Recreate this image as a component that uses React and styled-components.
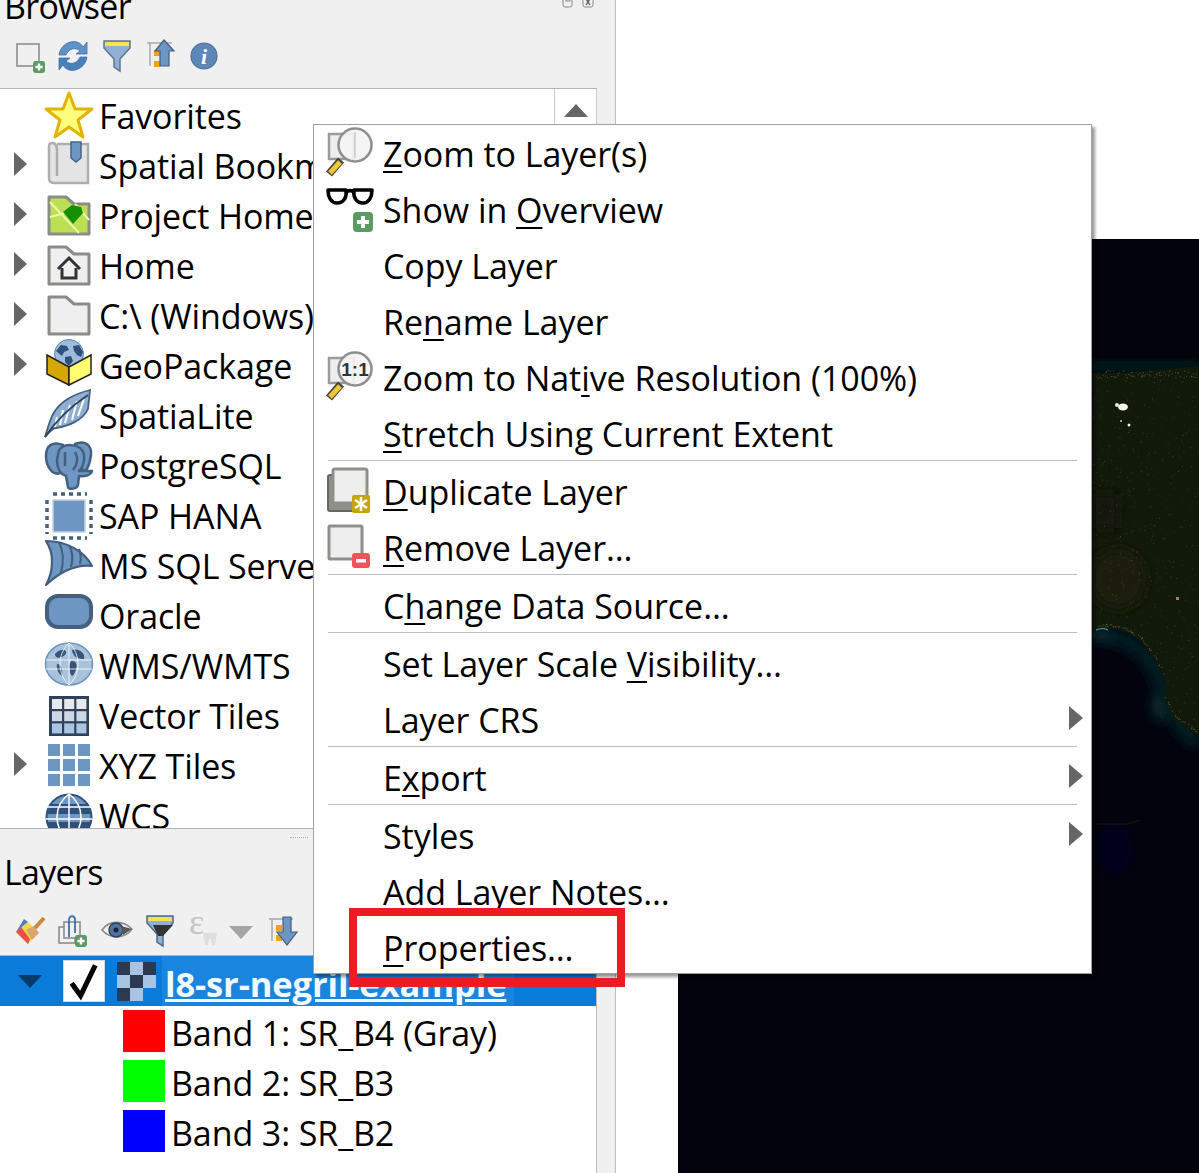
import React, { useMemo } from 'react';
import styled, { createGlobalStyle } from 'styled-components';

const GlobalStyle = createGlobalStyle`
    html, body { margin: 0; padding: 0; background: #ffffff; }
    body { font-family: 'Open Sans', 'Liberation Sans', sans-serif; color: #000000; }
`;

const Window = styled.div`
    position: relative;
    display: flex;
    width: 1199px;
    height: 1173px;
    overflow: hidden;
    background: #ffffff;
`;

const Sidebar = styled.div`
    display: flex;
    flex-direction: column;
    flex: 0 0 616px;
    box-sizing: border-box;
    height: 100%;
    background: #f0f0f0;
    border-right: 1px solid #bcbcbc;
`;

const PanelHead = styled.div`
    display: flex;
    justify-content: space-between;
    box-sizing: border-box;
    height: ${(p) => p.$height}px;
    padding-right: 21px;
`;

const PanelTitle = styled.div`
    font-size: 34px;
    line-height: 44px;
    padding-left: 4px;
    margin-top: ${(p) => p.$top}px;
    letter-spacing: -0.7px;
`;

const DockButtons = styled.div`
    display: flex;
    gap: 8px;
    margin-top: -4px;
    height: 13px;
`;

const Toolbar = styled.div`
    display: flex;
    align-items: center;
    box-sizing: border-box;
    height: ${(p) => p.$height}px;
    padding-left: 8px;
    padding-bottom: ${(p) => p.$bottom || 0}px;
    flex-shrink: 0;
`;

const ToolCell = styled.div`
    display: flex;
    justify-content: center;
    flex: 0 0 ${(p) => p.$width || 43.5}px;
`;

const Glyph = styled.svg`
    display: block;
    flex-shrink: 0;
    width: ${(p) => p.$w || p.$size}px;
    height: ${(p) => p.$h || p.$size}px;
    overflow: visible;
`;

const BrowserTree = styled.div`
    display: flex;
    box-sizing: border-box;
    width: 597px;
    height: 741px;
    background: #ffffff;
    border-top: 1px solid #b4b4b4;
    border-bottom: 1px solid #b4b4b4;
`;

const TreeList = styled.div`
    flex: 1;
    min-width: 0;
    padding-top: 2px;
    overflow: hidden;
`;

const Scrollbar = styled.div`
    flex: 0 0 43px;
    box-sizing: border-box;
    background: #f0f0f0;
    border-left: 1px solid #c8c8c8;
    border-right: 1px solid #c8c8c8;
`;

const ScrollButton = styled.div`
    display: flex;
    align-items: center;
    justify-content: center;
    height: 42px;
    background: #ffffff;
`;

const TreeRow = styled.div`
    display: flex;
    align-items: center;
    height: 50px;
    padding-left: 14px;
    white-space: nowrap;
`;

const Expander = styled.div`
    flex: 0 0 31px;
    margin-top: -4px;
`;

const TreeLabel = styled.span`
    margin-left: 6px;
    font-size: 34px;
    letter-spacing: -0.1px;
    line-height: 50px;
`;

const LayersPanel = styled.div`
    flex: 1;
    display: flex;
    flex-direction: column;
    min-height: 0;
`;

const Grip = styled.div`
    width: 18px;
    margin: 8px 0 0 290px;
    border-top: 1px dotted #b0b0b0;
`;

const LayerTree = styled.div`
    flex: 1;
    box-sizing: border-box;
    width: 597px;
    background: #ffffff;
    border-top: 1px solid #b4b4b4;
    border-right: 1px solid #bcbcbc;
`;

const SelectedLayer = styled.div`
    display: flex;
    align-items: center;
    height: 50px;
    padding-left: 18px;
    background: #0a7bd8;
`;

const LayerCheck = styled.div`
    display: flex;
    align-items: center;
    justify-content: center;
    box-sizing: border-box;
    width: 42px;
    height: 42px;
    margin-left: 21px;
    background: #ffffff;
    border: 1px solid #d8d8d8;
`;

const Checker = styled.div`
    display: grid;
    grid-template-columns: repeat(3, 13px);
    grid-auto-rows: 13px;
    margin-left: 12px;
`;

const CheckerCell = styled.div`
    background: ${(p) => p.$color};
`;

const LayerName = styled.span`
    margin-left: 6px;
    padding: 0 8px 0 3px;
    height: 50px;
    line-height: 56px;
    font-size: 34.5px;
    font-weight: 700;
    letter-spacing: -0.1px;
    color: #f2f8ff;
    background: #1a85de;
    text-decoration: underline;
    white-space: nowrap;
    overflow: hidden;
`;

const BandRow = styled.div`
    display: flex;
    align-items: center;
    height: 50px;
    padding-left: 123px;
`;

const Swatch = styled.div`
    width: 42px;
    height: 42px;
    background: ${(p) => p.$color};
`;

const BandLabel = styled.span`
    margin-left: 6px;
    padding-top: 3px;
    font-size: 34px;
    letter-spacing: -0.1px;
    line-height: 50px;
`;

const MapArea = styled.div`
    flex: 1;
    padding: 239px 0 0 62px;
    min-width: 0;
`;

const MapCanvas = styled.svg`
    display: block;
    width: 521px;
    height: 934px;
    background: #02030c;
`;

const ContextMenu = styled.div`
    position: absolute;
    left: 313px;
    top: 124px;
    box-sizing: border-box;
    width: 779px;
    height: 850px;
    overflow: hidden;
    background: #ffffff;
    border: 1px solid #a0a0a0;
    box-shadow: 3px 3px 3px rgba(0, 0, 0, 0.4);
`;

const MenuRow = styled.div`
    display: flex;
    align-items: center;
    height: 56px;
    padding: 0 8px 0 12px;
    white-space: nowrap;
`;

const MenuIcon = styled.div`
    flex: 0 0 48px;
    height: 48px;
`;

const MenuLabel = styled.span`
    margin-left: 9px;
    font-size: 34px;
    letter-spacing: -0.05px;
    line-height: 56px;
    padding-top: 1px;

    u {
        text-underline-offset: 4px;
        text-decoration-thickness: 2px;
    }
`;

const SubArrow = styled.div`
    margin-left: auto;
    margin-top: -2px;
`;

const MenuSeparator = styled.div`
    height: 1px;
    margin: -1px 14px 2px 14px;
    background: #bdbdbd;
`;

const Callout = styled.div`
    position: absolute;
    left: 349px;
    top: 908px;
    box-sizing: border-box;
    width: 276px;
    height: 79px;
    border: 8px solid #ed1c24;
    border-bottom-width: 9px;
    pointer-events: none;
`;

const BLUE = '#6d96c3';
const DARK = '#45607f';

function Triangle({ dir = 'right', fill = '#666666', w = 13, h = 24 }) {
    const points = {
        right: `0,0 ${w},${h / 2} 0,${h}`,
        down: `0,0 ${w},0 ${w / 2},${h}`,
        up: `0,${h} ${w},${h} ${w / 2},0`,
    };
    return (
        <Glyph $w={w} $h={h} viewBox={`0 0 ${w} ${h}`}>
            <polygon points={points[dir]} fill={fill} />
        </Glyph>
    );
}

function FolderShape({ fill = '#efefef' }) {
    return <path d="M4 5H21L29 12H44V42H4Z" fill={fill} stroke="#8a8c88" strokeWidth="3" strokeLinejoin="round" />;
}

const icon48 = (body) => () => <Glyph $size={48} viewBox="0 0 48 48">{body}</Glyph>;

const StarIcon = icon48(
    <polygon points="24,1 30,17 47,17 33,28 38,45 24,35 10,45 15,28 1,17 18,17" fill="#ffff7f" stroke="#e2b300" strokeWidth="3" strokeLinejoin="round" />
);

const BookmarkIcon = icon48(<>
    <path d="M12 2H43V41H9C5 41 4 39 4 36V4C4 1 8 0 10 2C12 4 12 6 12 8V34" fill="#e4e4e4" stroke="#aeaeae" strokeWidth="2.5" />
    <path d="M26 0H36V16L31 20L26 16Z" fill="#6d96c3" stroke="#47648a" strokeWidth="1.5" />
</>);

const ProjectIcon = icon48(<>
    <FolderShape fill="#bbe054" />
    <path d="M5 10L34 41M5 25L20 21M30 12L44 28" stroke="#f2f5b0" strokeWidth="2" fill="none" />
    <polygon points="18,20 27,13 36,15 38,21 28,32" fill="#159000" />
</>);

const HomeIcon = icon48(<>
    <FolderShape />
    <path d="M13 27L24 16L35 27M17 26V36H31V26" fill="none" stroke="#333333" strokeWidth="3" />
</>);

const DriveIcon = icon48(<FolderShape />);

const GeoPackageIcon = icon48(<>
    <circle cx="24" cy="12" r="14.5" fill="#9dbbdc" stroke="#5d83ae" strokeWidth="1" />
    <path d="M11 9L16 3L22 4L24 8L19 10L17 14ZM28 4L34 3L38 10L36 15L32 13L29 9ZM20 15L26 14L28 19L24 24L20 20Z" fill="#2f5079" />
    <polygon points="2,13 24,25 24,43 2,32" fill="#d4a800" stroke="#222222" strokeWidth="1.5" />
    <polygon points="46,13 24,25 24,43 46,32" fill="#ffff70" stroke="#222222" strokeWidth="1.5" />
</>);

const SpatiaLiteIcon = icon48(<>
    <path d="M45 -2C30 2 15 8 7 24C4 31 2 38 0 45C4 40 8 36 11 36C24 34 38 28 43 17Z" fill="#8fb0d4" stroke="#45607f" strokeWidth="1.8" />
    <path d="M39 7L33 24M32 9L27 28M25 13L20 31M18 18L15 33M12 25L10 35" stroke="#ffffff" strokeWidth="2" fill="none" />
    <path d="M0 45C10 30 25 15 43 3" stroke="#2f4158" strokeWidth="1.8" fill="none" />
</>);

const PostgresIcon = icon48(<>
    <path d="M18 3C8 -1 1 3 1 14C1 25 8 34 15 31L19 18Z" fill={BLUE} stroke={DARK} strokeWidth="2.5" />
    <path d="M30 2C40 -2 47 3 46 13C45 21 43 26 40 30L30 18Z" fill={BLUE} stroke={DARK} strokeWidth="2.5" />
    <path d="M14 8C20 1 32 2 37 8C41 14 39 24 34 29L47 29C46 33 40 35 34 34L33 43C32 47 24 48 23 45L21 34C15 32 12 26 12 18Z" fill={BLUE} stroke={DARK} strokeWidth="2.5" strokeLinejoin="round" />
    <path d="M20 10V24M30 10C33 15 33 22 28 28" fill="none" stroke={DARK} strokeWidth="2.5" />
</>);

const HanaIcon = icon48(<>
    <rect x="8" y="8" width="32" height="32" fill={BLUE} stroke="#c5d2e1" strokeWidth="1.5" />
    <path d="M8 2H42M2 8V42M8 46H42M46 8V42" stroke={DARK} strokeWidth="3.5" strokeDasharray="4 4" fill="none" />
</>);

const SailIcon = icon48(<>
    <path d="M1 -1C22 -1 40 10 47 24C30 22 15 30 1 43C8 30 10 12 1 -1Z" fill={BLUE} stroke={DARK} strokeWidth="2.2" strokeLinejoin="round" />
    <path d="M14 0C18 8 19 20 16 31M24 3C28 10 28 18 26 25M34 7C36 12 36 18 35 22" fill="none" stroke={DARK} strokeWidth="2.2" />
</>);

const OracleIcon = icon48(
    <rect x="2" y="-7" width="44" height="31" rx="11" fill={BLUE} stroke={DARK} strokeWidth="4" transform="translate(0 11)" />
);

const WmsIcon = icon48(<>
    <ellipse cx="24" cy="22" rx="23.5" ry="21" fill="#a9c2dc" stroke="#6b93c0" strokeWidth="1.5" />
    <path d="M10 12C15 6 22 7 21 11C19 16 10 18 10 12ZM27 8C34 6 41 12 39 17C33 17 28 15 27 8ZM26 19C32 18 33 24 30 30C28 35 26 35 25 30C24 26 24 22 26 19ZM12 22C16 22 18 28 17 34C14 32 11 27 12 22Z" fill="#34547a" />
    <path d="M1 18H47M1 27H47M24 1V43M24 1C12 12 12 32 24 43M24 1C36 12 36 32 24 43" fill="none" stroke="#ffffff" strokeWidth="0.8" />
</>);

const VectorTilesIcon = icon48(<>
    <rect x="4" y="4" width="40" height="40" fill="#2f4158" />
    {[0, 1, 2].map((r) => [0, 1, 2].map((c) => (
        <rect key={`${r}${c}`} x={7 + c * 12.2} y={7 + r * 12.2} width="10" height="10" fill={['#e6e8ec', '#ccd8e6', '#a9c5e3'][r]} />
    )))}
</>);

const XyzIcon = icon48(<>
    {[0, 1, 2].map((r) => [0, 1, 2].map((c) => (
        <rect key={`${r}${c}`} x={3 + c * 15} y={2 + r * 15} width="12" height="12" fill={BLUE} />
    )))}
</>);

const WcsIcon = icon48(<>
    <circle cx="24" cy="25" r="22.5" fill={BLUE} stroke="#2f5079" strokeWidth="2" />
    <path d="M6 12H42L46 22H2ZM2 30H46L42 40H6Z" fill="#2f5079" />
    <path d="M1 15H47M1 27H47M24 2V48M24 2C8 14 8 36 24 48M24 2C40 14 40 36 24 48" fill="none" stroke="#ffffff" strokeWidth="1.5" />
</>);

const treeItems = [
    { label: 'Favorites', Icon: StarIcon },
    { label: 'Spatial Bookmarks', Icon: BookmarkIcon, arrow: true },
    { label: 'Project Home', Icon: ProjectIcon, arrow: true },
    { label: 'Home', Icon: HomeIcon, arrow: true },
    { label: 'C:\\ (Windows)', Icon: DriveIcon, arrow: true },
    { label: 'GeoPackage', Icon: GeoPackageIcon, arrow: true },
    { label: 'SpatiaLite', Icon: SpatiaLiteIcon },
    { label: 'PostgreSQL', Icon: PostgresIcon },
    { label: 'SAP HANA', Icon: HanaIcon },
    { label: 'MS SQL Server', Icon: SailIcon },
    { label: 'Oracle', Icon: OracleIcon },
    { label: 'WMS/WMTS', Icon: WmsIcon },
    { label: 'Vector Tiles', Icon: VectorTilesIcon },
    { label: 'XYZ Tiles', Icon: XyzIcon, arrow: true },
    { label: 'WCS', Icon: WcsIcon },
];

const Tool = ({ children, width }) => (
    <ToolCell $width={width}>
        <Glyph $size={32} viewBox="0 0 32 32">{children}</Glyph>
    </ToolCell>
);

const GreenPlus = ({ x, y, s = 12 }) => (
    <>
        <rect x={x} y={y} width={s} height={s} rx={s / 5} fill="#5b9a62" />
        <path d={`M${x + s / 2} ${y + s / 5}V${y + s - s / 5}M${x + s / 5} ${y + s / 2}H${x + s - s / 5}`} stroke="#ffffff" strokeWidth={s / 5} />
    </>
);

function BrowserToolbar() {
    return (
        <Toolbar $height={54} $bottom={10}>
            <Tool>
                <rect x="3" y="4" width="22" height="22" fill="none" stroke="#8e8e8e" strokeWidth="1.6" />
                <GreenPlus x={19} y={21} />
            </Tool>
            <Tool>
                <path d="M2 15C3 6 12 0 20 2C23 3 25 5 26 7L30 2V14H19L23 11C19 7 12 8 9 15Z" fill="#5f93c8" stroke="#3d6fa6" strokeWidth="0.8" />
                <path d="M30 17C29 26 20 32 12 30C9 29 7 27 6 25L2 30V18H13L9 21C13 25 20 24 23 17Z" fill="#4a80ba" stroke="#3d6fa6" strokeWidth="0.8" />
            </Tool>
            <Tool>
                <path d="M3 1H29V8L19 19V31L13 27V19L3 8Z" fill="#8fb0d4" stroke="#5b7894" strokeWidth="1.5" />
                <rect x="4" y="2" width="24" height="4" fill="#ffe14d" />
            </Tool>
            <Tool>
                <path d="M3 3H28M6 3V26" stroke="#a8a8a8" strokeWidth="1.5" fill="none" />
                <rect x="10" y="10" width="6" height="6" fill="#f7a11a" />
                <rect x="10" y="21" width="6" height="6" fill="#f7a11a" />
                <path d="M20 0L30 11H25V26H16V11H11Z" fill="#6d96c3" stroke="#3e5f86" strokeWidth="1.2" />
            </Tool>
            <Tool>
                <circle cx="16" cy="16" r="13" fill="#5d87b8" stroke="#4f739c" strokeWidth="1.2" />
                <text x="16" y="24" fontFamily="Liberation Serif, serif" fontStyle="italic" fontWeight="700" fontSize="22" fill="#ffffff" textAnchor="middle">i</text>
            </Tool>
        </Toolbar>
    );
}

function LayersToolbar() {
    return (
        <Toolbar $height={49}>
            <Tool>
                <polygon points="2,17 14,7 24,17 14,29" fill="#f2d64b" />
                <polygon points="2,17 8,23 14,29 16,24 7,12" fill="#e8514a" />
                <polygon points="2,17 10,10 14,7 10,4" fill="#4a7cc0" />
                <path d="M12 15L20 11L25 18L18 25Z" fill="#d9a66b" />
                <path d="M21 13L30 3" stroke="#c88a3d" strokeWidth="4" />
            </Tool>
            <Tool>
                <rect x="2" y="12" width="16" height="16" fill="none" stroke="#8e8e8e" strokeWidth="1.6" />
                <rect x="7" y="7" width="16" height="16" fill="#efefef" stroke="#8e8e8e" strokeWidth="1.6" />
                <path d="M12 22V5C12 0 18 0 18 5V18" fill="none" stroke="#3e6fa8" strokeWidth="1.8" />
                <GreenPlus x={18} y={20} />
            </Tool>
            <Tool>
                <path d="M1 15C8 5 22 5 31 14C24 24 9 24 1 15Z" fill="#f2f2f2" stroke="#8a8a8a" strokeWidth="1.6" />
                <circle cx="15" cy="15" r="7" fill="#4f74a3" stroke="#2f4158" strokeWidth="1.5" />
                <circle cx="15" cy="15" r="2.5" fill="#1c2533" />
                <path d="M20 11L31 14L22 20" fill="#555555" />
            </Tool>
            <Tool>
                <path d="M3 1H29V8L19 19V31L13 27V19L3 8Z" fill="#8fb0d4" stroke="#4f6b87" strokeWidth="1.5" />
                <rect x="4" y="2" width="24" height="4" fill="#ffe14d" />
                <polygon points="9,10 29,10 19,21 14,21" fill="#333333" />
            </Tool>
            <Tool>
                <text x="1" y="19" fontFamily="Liberation Serif, serif" fontSize="36" fill="#c4c4c4">ε</text>
                <path d="M15 18H29L27 30H24L23 24H21L20 30H17Z" fill="#dedede" />
            </Tool>
            <ToolCell $width={36}>
                <Glyph $size={24} viewBox="0 0 24 24">
                    <polygon points="0,7 24,7 12,20" fill="#a4a4a4" transform="translate(-3 0)" />
                </Glyph>
            </ToolCell>
            <Tool>
                <path d="M2 4H26M5 4V26" stroke="#a8a8a8" strokeWidth="1.5" fill="none" />
                <rect x="9" y="10" width="6" height="6" fill="#f7a11a" />
                <rect x="9" y="20" width="6" height="6" fill="#f7a11a" />
                <path d="M16 2H24V17H30L20 30L10 17H16Z" fill="#6d96c3" stroke="#3e5f86" strokeWidth="1.2" />
            </Tool>
            <Tool>
                <path d="M4 4H28" stroke="#a8a8a8" strokeWidth="1.5" />
            </Tool>
        </Toolbar>
    );
}

const Lens = ({ children }) => (
    <>
        <rect x="3" y="5" width="25" height="25" fill="#eeeeee" stroke="#9a9a9a" strokeWidth="2.5" />
        <path d="M15 31L3 45" stroke="#444444" strokeWidth="8" />
        <path d="M14 33L4 44" stroke="#f2c934" strokeWidth="5" />
        <circle cx="29" cy="16" r="16.5" fill="#f4f4f4" fillOpacity="0.9" stroke="#8e8e8e" strokeWidth="2.5" />
        {children}
    </>
);

const menuIcons = {
    zoom: <Lens><path d="M29 3V29" stroke="#d4d4d4" strokeWidth="2" /></Lens>,
    glasses: (
        <>
            <path d="M2 5H20C21 12 18 18 11 18C5 18 2 12 2 5ZM28 5H46C46 12 43 18 37 18C30 18 27 12 28 5ZM20 7C23 5 25 5 28 7" fill="#ffffff" stroke="#000000" strokeWidth="3.6" strokeLinejoin="round" />
            <GreenPlus x={27} y={27} s={20} />
        </>
    ),
    native: (
        <Lens>
            <text x="29" y="23" fontFamily="Liberation Sans, sans-serif" fontWeight="700" fontSize="19" fill="#333333" textAnchor="middle">1:1</text>
        </Lens>
    ),
    duplicate: (
        <>
            <rect x="2" y="8" width="34" height="36" rx="2" fill="#8e8f88" stroke="#666760" strokeWidth="2" />
            <rect x="7" y="2" width="34" height="34" rx="2" fill="#eeeeee" stroke="#8f908a" strokeWidth="3" />
            <rect x="26" y="28" width="18" height="18" rx="2" fill="#c6a500" />
            <path d="M35 30V44M29 33L41 41M41 33L29 41" stroke="#ffffff" strokeWidth="2.6" />
        </>
    ),
    remove: (
        <>
            <rect x="3" y="3" width="33" height="33" rx="1" fill="#eeeeee" stroke="#8f908a" strokeWidth="3" />
            <rect x="26" y="30" width="18" height="15" rx="3" fill="#f2535b" />
            <rect x="30" y="36" width="10" height="3.5" fill="#ffffff" />
        </>
    ),
};

const U = ({ children }) => <u>{children}</u>;

const menuItems = [
    { label: <><U>Z</U>oom to Layer(s)</>, icon: 'zoom' },
    { label: <>Show in <U>O</U>verview</>, icon: 'glasses' },
    { label: 'Copy Layer' },
    { label: <>Re<U>n</U>ame Layer</> },
    { label: <>Zoom to Nat<U>i</U>ve Resolution (100%)</>, icon: 'native' },
    { label: <><U>S</U>tretch Using Current Extent</> },
    { separator: true },
    { label: <><U>D</U>uplicate Layer</>, icon: 'duplicate' },
    { label: <><U>R</U>emove Layer…</>, icon: 'remove' },
    { separator: true },
    { label: <>C<U>h</U>ange Data Source…</> },
    { separator: true },
    { label: <>Set Layer Scale <U>V</U>isibility…</> },
    { label: 'Layer CRS', sub: true },
    { separator: true },
    { label: <>E<U>x</U>port</>, sub: true },
    { separator: true },
    { label: 'Styles', sub: true },
    { label: 'Add Layer Notes…' },
    { label: <><U>P</U>roperties…</> },
];

// coast of the land part, in map coordinates
const coast = [[0, 391], [414, 391], [432, 389], [448, 393], [462, 401], [477, 421], [487, 441], [487, 461], [497, 481], [521, 497]];

function coastY(x) {
    for (let i = 1; i < coast.length; i++) {
        if (x <= coast[i][0]) {
            const [x0, y0] = coast[i - 1];
            const [x1, y1] = coast[i];
            return y0 + ((y1 - y0) * (x - x0)) / (x1 - x0);
        }
    }
    return 497;
}

function SatelliteMap() {
    const specks = useMemo(() => {
        let seed = 4711;
        const rnd = () => {
            seed = (seed * 16807) % 2147483647;
            return seed / 2147483647;
        };
        const out = [];
        for (let i = 0; i < 1400; i++) {
            const x = 414 + rnd() * 107;
            const y = 131 + rnd() * 360;
            if (y > coastY(x)) continue;
            const warm = rnd() > 0.7;
            out.push({ x, y, c: warm ? '#6e5c34' : '#27331a', o: 0.25 + rnd() * 0.4 });
        }
        for (let i = 0; i < 70; i++) {
            const x = 414 + rnd() * 107;
            out.push({ x, y: coastY(x) - 2 - rnd() * 3, c: '#8a7a4e', o: 0.6 });
            out.push({ x, y: 131 + rnd() * 8, c: '#85764a', o: 0.6 });
        }
        return out;
    }, []);

    const landPath = `M0 133L440 134L480 131L521 127V497${coast.slice().reverse().slice(1).map(([x, y]) => `L${x} ${y}`).join('')}Z`;

    return (
        <MapCanvas viewBox="0 0 521 934">
            <defs>
                <filter id="soft" x="-50%" y="-50%" width="200%" height="200%"><feGaussianBlur stdDeviation="6" /></filter>
                <filter id="softer" x="-50%" y="-50%" width="200%" height="200%"><feGaussianBlur stdDeviation="2" /></filter>
            </defs>
            <rect x="400" y="120" width="121" height="14" fill="#051315" filter="url(#softer)" />
            <path d="M405 395C440 392 462 405 478 430C488 455 488 475 521 505" stroke="#051a22" strokeWidth="18" fill="none" filter="url(#soft)" />
            <path d="M414 392L430 392L436 404L414 400Z" fill="#08272f" filter="url(#soft)" />
            <path d="M478 450L490 470L484 486L472 470Z" fill="#092a2e" filter="url(#soft)" />
            <ellipse cx="437" cy="610" rx="18" ry="26" fill="#03051e" filter="url(#soft)" />
            <path d={landPath} fill="#11190a" />
            <ellipse cx="440" cy="340" rx="28" ry="30" fill="#1a1f0f" filter="url(#soft)" />
            <rect x="414" y="255" width="26" height="34" fill="#171509" filter="url(#soft)" />
            <path d="M418 391C423 389 427 389 430 391" stroke="#3f8087" strokeWidth="1.6" fill="none" />
            {specks.map((d, i) => (
                <rect key={i} x={d.x} y={d.y} width="1" height="1" fill={d.c} opacity={d.o} />
            ))}
            <ellipse cx="445" cy="168" rx="5" ry="3.5" fill="#f4f4f0" />
            <circle cx="439" cy="166" r="2" fill="#e8e8e0" />
            <circle cx="451" cy="186" r="1.5" fill="#eeeeea" />
            <circle cx="443" cy="182" r="1" fill="#c8c8c0" />
            <rect x="498" y="358" width="3" height="3" fill="#a8844a" />
            <path d="M417 585H450L462 581" stroke="#3a2e10" strokeWidth="1" fill="none" opacity="0.5" />
        </MapCanvas>
    );
}

const checkerColors = ['#2b3a50', '#a9c4e2', '#2b3a50', '#a9c4e2', '#2b3a50', '#a9c4e2', '#2b3a50', '#a9c4e2', 'transparent'];

function App() {
    return (
        <Window>
            <GlobalStyle />
            <Sidebar>
                <PanelHead $height={34}>
                    <PanelTitle $top={-16}>Browser</PanelTitle>
                    <DockButtons>
                        <Glyph $size={12} viewBox="0 0 12 12">
                            <rect x="1" y="1" width="9" height="10" rx="2" fill="none" stroke="#8a8a8a" />
                            <rect x="4" y="0" width="4" height="5" fill="none" stroke="#8a8a8a" />
                        </Glyph>
                        <Glyph $size={12} viewBox="0 0 12 12">
                            <rect x="1" y="1" width="10" height="10" rx="2" fill="none" stroke="#8a8a8a" />
                            <path d="M4 3L8 9M8 3L4 9" stroke="#555555" strokeWidth="1.3" />
                        </Glyph>
                    </DockButtons>
                </PanelHead>
                <BrowserToolbar />
                <BrowserTree>
                    <TreeList>
                        {treeItems.map(({ label, Icon, arrow }) => (
                            <TreeRow key={label}>
                                <Expander>{arrow && <Triangle />}</Expander>
                                <Icon />
                                <TreeLabel>{label}</TreeLabel>
                            </TreeRow>
                        ))}
                    </TreeList>
                    <Scrollbar>
                        <ScrollButton>
                            <Triangle dir="up" w={24} h={13} />
                        </ScrollButton>
                    </Scrollbar>
                </BrowserTree>
                <LayersPanel>
                    <Grip />
                    <PanelHead $height={68}>
                        <PanelTitle $top={12}>Layers</PanelTitle>
                    </PanelHead>
                    <LayersToolbar />
                    <LayerTree>
                        <SelectedLayer>
                            <Triangle dir="down" fill="#0a3a6a" w={24} h={13} />
                            <LayerCheck>
                                <Glyph $size={36} viewBox="0 0 32 32">
                                    <path d="M5 18L13 29L26 2" fill="none" stroke="#000000" strokeWidth="4.5" />
                                </Glyph>
                            </LayerCheck>
                            <Checker>
                                {checkerColors.map((c, i) => <CheckerCell key={i} $color={c} />)}
                            </Checker>
                            <LayerName>l8-sr-negril-example</LayerName>
                        </SelectedLayer>
                        <BandRow><Swatch $color="#ff0000" /><BandLabel>Band 1: SR_B4 (Gray)</BandLabel></BandRow>
                        <BandRow><Swatch $color="#00ff00" /><BandLabel>Band 2: SR_B3</BandLabel></BandRow>
                        <BandRow><Swatch $color="#0000ff" /><BandLabel>Band 3: SR_B2</BandLabel></BandRow>
                    </LayerTree>
                </LayersPanel>
            </Sidebar>
            <MapArea>
                <SatelliteMap />
            </MapArea>
            <ContextMenu>
                {menuItems.map((item, i) => (item.separator ? (
                    <MenuSeparator key={i} />
                ) : (
                    <MenuRow key={i}>
                        <MenuIcon>
                            {item.icon && <Glyph $size={48} viewBox="0 0 48 48">{menuIcons[item.icon]}</Glyph>}
                        </MenuIcon>
                        <MenuLabel>{item.label}</MenuLabel>
                        {item.sub && <SubArrow><Triangle w={14} h={24} /></SubArrow>}
                    </MenuRow>
                )))}
            </ContextMenu>
            <Callout />
        </Window>
    );
}

export default App;
